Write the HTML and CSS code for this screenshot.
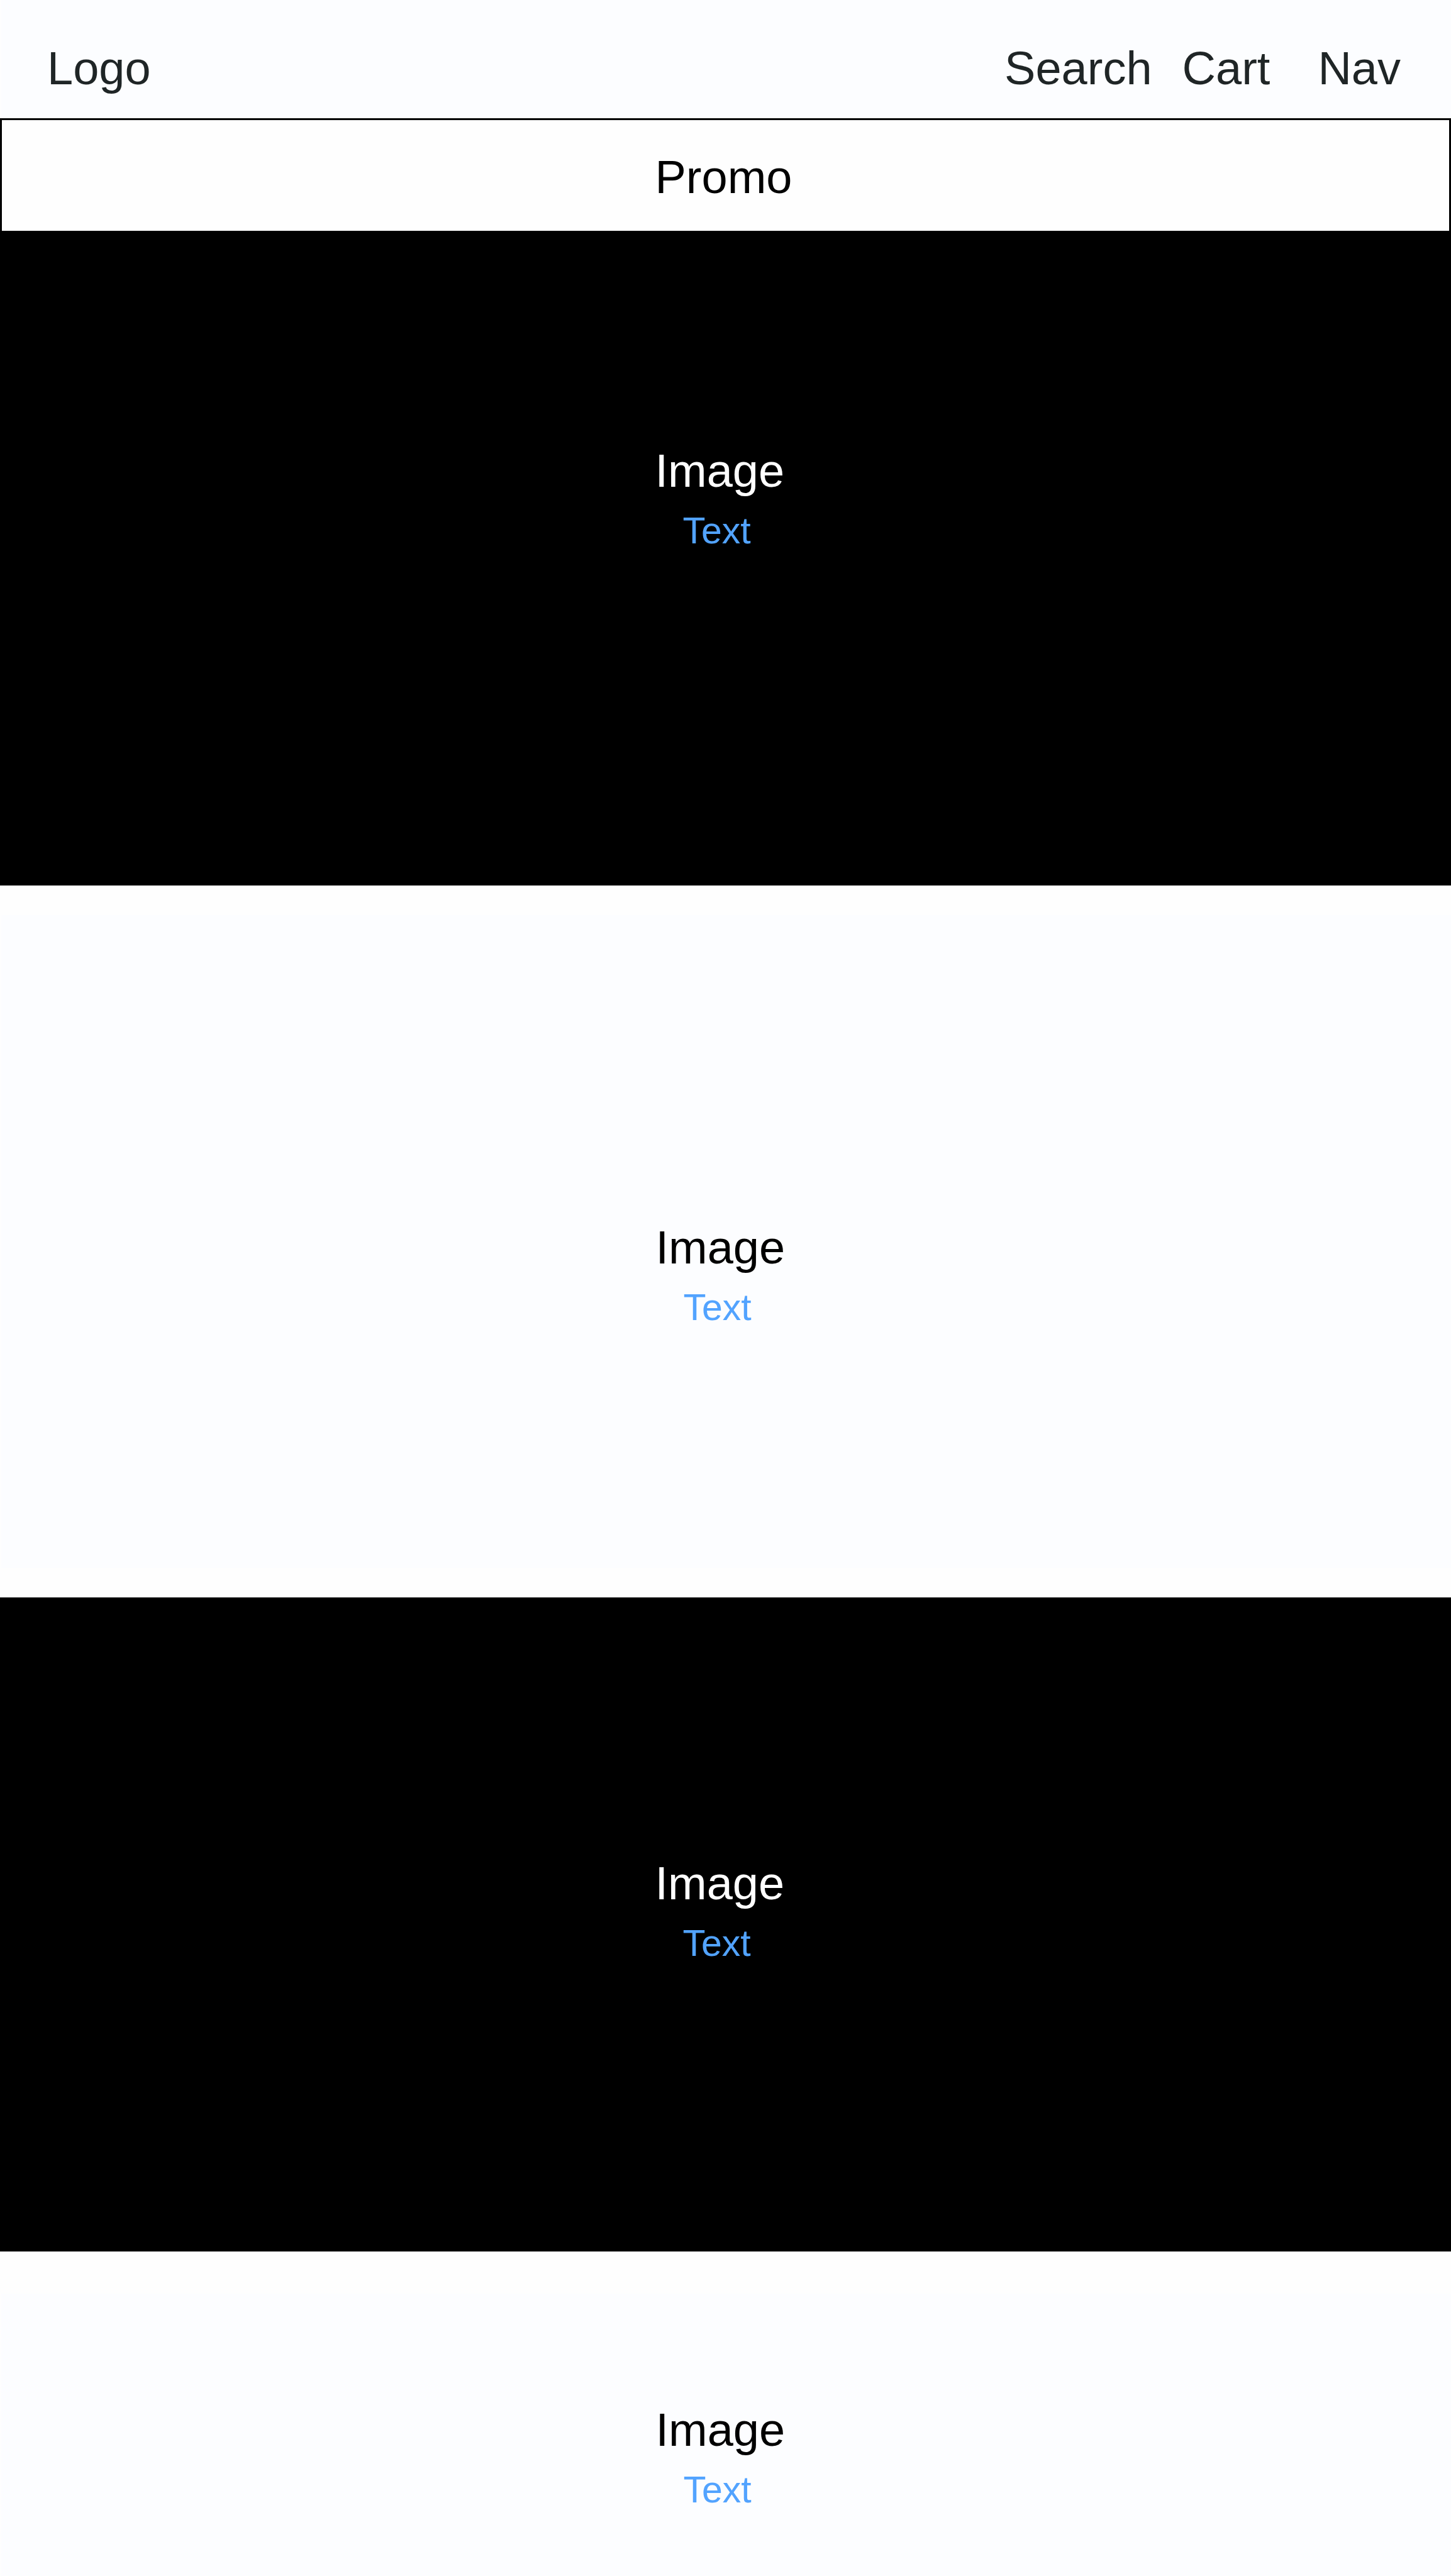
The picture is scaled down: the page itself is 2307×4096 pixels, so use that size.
FILE: index.html
```html
<!DOCTYPE html>
<html lang="en">
<head>
<meta charset="utf-8">
<meta name="viewport" content="width=device-width, initial-scale=1">
<title>Logo</title>
<link rel="stylesheet" href="styles.css">
</head>
<body class="page">
<header class="header">
  <a class="link" href="#">Logo</a>
  <nav class="nav">
    <a class="link" href="#search">Search</a>
    <a class="link link-cart" href="#cart">Cart</a>
    <a class="link" href="#nav">Nav</a>
  </nav>
</header>
<aside class="promo"><p class="caption title">Promo</p></aside>
<main class="panels">
  <section class="panel panel-dark panel-first">
    <div class="caption"><h2 class="title">Image</h2><a class="more" href="#one">Text</a></div>
  </section>
  <section class="panel panel-light panel-second">
    <div class="caption"><h2 class="title">Image</h2><a class="more" href="#two">Text</a></div>
  </section>
  <section class="panel panel-dark panel-third">
    <div class="caption"><h2 class="title">Image</h2><a class="more" href="#three">Text</a></div>
  </section>
  <section class="panel panel-light panel-last">
    <div class="caption"><h2 class="title">Image</h2><a class="more" href="#four">Text</a></div>
  </section>
</main>
</body>
</html>
```
FILE: styles.css
```css
* {
  box-sizing: border-box;
}

.page {
  display: flex;
  flex-direction: column;
  min-height: 100vh;
  margin: 0;
  background: #fefefe;
  color: #000;
  font-family: "Liberation Sans", Arial, sans-serif;
  font-size: 74px;
  line-height: 90px;
}

.header {
  display: flex;
  justify-content: space-between;
  margin-left: 2px;
  padding: 64px 80px 34px 73px;
  background: #fcfdff;
}

.nav {
  display: flex;
  gap: 48px;
}

.link {
  color: #1f2526;
  text-decoration: none;
}

.link-cart {
  margin-right: 28px;
}

.promo {
  padding: 46px 0 40px;
  border: 3px solid #000;
}

.caption {
  width: 224px;
  margin: 0 auto;
}

.title {
  font-size: 74px;
  font-weight: 400;
  line-height: 90px;
}

h2.title {
  margin: 0;
}

.more {
  display: block;
  padding-left: 44px;
  color: #52a3ff;
  font-size: 59px;
  line-height: 100px;
  text-decoration: none;
}

.panels {
  display: flex;
  flex: 1;
  flex-direction: column;
}

.panel {
  min-height: 1038px;
}

.panel-dark {
  background: #000;
  color: #fff;
}

.panel-light {
  margin-left: 2px;
  background: #fcfdff;
}

.panel-first {
  padding-top: 334px;
}

.panel-second {
  margin-top: 47px;
  margin-bottom: 47px;
  padding-top: 484px;
}

.panel-third {
  padding-top: 410px;
  min-height: 1040px;
}

.panel-last {
  flex: 1;
  min-height: 0;
  margin-top: 67px;
  padding: 172px 0 80px;
}
```
